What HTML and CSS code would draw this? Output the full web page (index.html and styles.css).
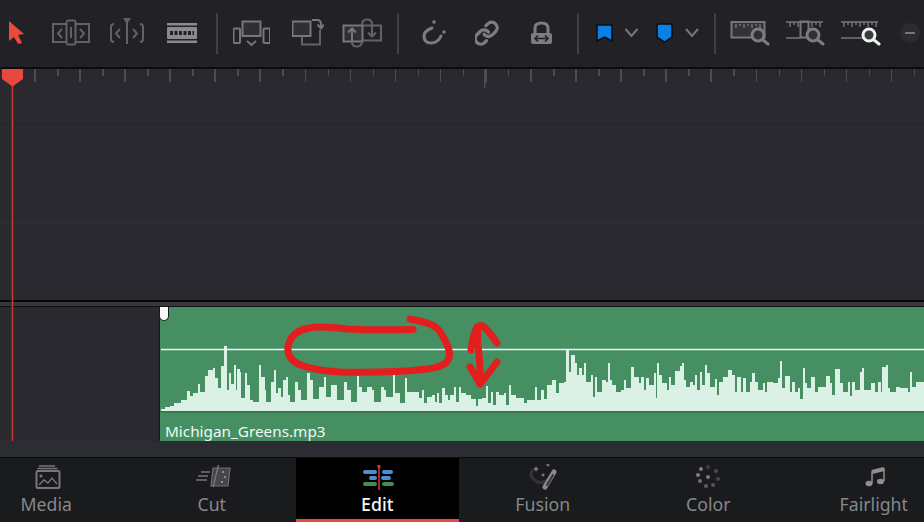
FILE: index.html
```html
<!DOCTYPE html>
<html lang="en">
<head>
    <meta charset="UTF-8">
    <meta name="viewport" content="width=device-width, initial-scale=1.0">
    <title>Edit page timeline</title>
    <link rel="stylesheet" href="styles.css">
</head>
<body>
    <div class="toolbar">
        <!-- every icon uses page coordinates in its viewBox -->
        <svg class="tool tool-arrow" viewBox="8 0 17 67"><path class="red" d="M9 21L24 34 18 35 22 43 18 44 14 37 9 41Z"/></svg>
        <svg class="tool tool-trim" viewBox="52 0 38 67"><g class="line dim"><path d="M66 24H53V42H66M76 24H89V42H76"/><rect x="66.5" y="20.5" width="9" height="24" rx="2"/><path d="M71 27V38M62 29L58 33.500 62 38M80 29L84 33.500 80 38"/></g></svg>
        <svg class="tool tool-dynamic" viewBox="110 0 34 67"><g class="line dim"><path d="M114 24Q111 24 111 27V39Q111 42 114 42M140 24Q143 24 143 27V39Q143 42 140 42M127 22V44M120 29L116 33.500 120 38M133 29L137 33.500 133 38"/></g><path class="dim-fill" d="M123 18H131L127 24Z"/></svg>
        <svg class="tool tool-blade" viewBox="167 0 30 67"><rect class="blade" x="167" y="23" width="30" height="2.500"/><rect class="blade" x="167" y="40.500" width="30" height="2.500"/><rect class="blade" x="167" y="27" width="30" height="12" rx="1"/><path class="blade-cut" d="M170 33H194"/></svg>
        <span class="sep sep-one"></span>
        <svg class="tool tool-insert" viewBox="233 0 37 67"><g class="line"><rect class="panel" x="242.500" y="21.500" width="18" height="14.500"/><rect x="233.500" y="28.500" width="6.500" height="14.500" rx="1"/><rect x="263.500" y="28.500" width="6.500" height="14.500" rx="1"/><path d="M247 41L251.500 45 256 41"/></g></svg>
        <svg class="tool tool-overwrite" viewBox="292 0 32 67"><g class="line"><path class="dim" d="M305 44.500H320V30"/><path class="dim" d="M302 37V44.500H306"/><rect class="panel" x="292.500" y="21.500" width="18" height="14.500"/><path d="M312 20H317Q321 20 321 24V28M317.500 24.500L321 28.500 324 24.500"/></g></svg>
        <svg class="tool tool-replace" viewBox="342 0 40 67"><g class="line"><rect class="dim" x="362" y="25.500" width="19" height="15"/><rect class="panel" x="343.500" y="25.500" width="19" height="16"/><path d="M352 44V29M348 32.500L352 28.500 356 32.500"/><path class="dim" d="M372 24V36M368 32.500L372 36.500 376 32.500M362 25Q362 19.500 367 19.500 372 19.500 372 24M352 42Q352 46.500 357 46.500 362 46.500 362 41"/></g></svg>
        <span class="sep sep-two"></span>
        <svg class="tool tool-snap" viewBox="422 0 24 67"><path class="line thick" d="M432 28Q424 31 424 36 424 43 431 43 438 43 441 36"/><circle class="gray-fill" cx="434" cy="22" r="1.800"/><circle class="gray-fill" cx="444" cy="32" r="1.800"/></svg>
        <svg class="tool tool-link" viewBox="475 0 24 67"><g class="line thick" transform="translate(473 20) scale(1.1)"><path d="M10 13a5 5 0 0 0 7.540.540l3-3a5 5 0 0 0-7.070-7.070l-1.720 1.710"/><path d="M14 11a5 5 0 0 0-7.540-.540l-3 3a5 5 0 0 0 7.070 7.070l1.710-1.710"/></g></svg>
        <svg class="tool tool-lock" viewBox="530 0 23 67"><path class="line thick" d="M535 33V28Q535 23 541.500 23 548 23 548 28V33"/><rect class="gray-fill" x="531" y="33" width="21" height="11" rx="2"/><path class="lock-arrow" d="M535 38.500H548M538 35.500L535 38.500 538 41.500M545 35.500L548 38.500 545 41.500"/></svg>
        <span class="sep sep-three"></span>
        <svg class="tool tool-flag" viewBox="595 0 18 67"><path class="blue-mark" d="M597 25H612V41L604.500 37 597 41Z"/></svg>
        <svg class="tool tool-chevron-a" viewBox="625 0 13 67"><path class="line" d="M625.500 29L631.500 36 637.500 29"/></svg>
        <svg class="tool tool-marker" viewBox="656 0 18 67"><path class="blue-mark" d="M659 24H670Q672 24 672 26V37L664.500 42 657 37V26Q657 24 659 24Z"/></svg>
        <svg class="tool tool-chevron-b" viewBox="685 0 14 67"><path class="line" d="M686 29L692 36 698 29"/></svg>
        <span class="sep sep-four"></span>
        <svg class="tool tool-zoom-a" viewBox="729 0 40 67"><rect class="ruler-fill" x="730.500" y="22" width="33" height="15.500"/><path class="line thin" d="M735 24V28M739 24V26M743 24V28M747 24V26M751 24V28M755 24V26M759 24V28"/><circle class="lens" cx="757" cy="35" r="6"/><path class="line thick" d="M762 40L767 44"/></svg>
        <svg class="tool tool-zoom-b" viewBox="784 0 40 67"><path class="line thin" d="M785 22H822M789 22V27M793 22V25M797 22V27M811 22V27M815 22V25M819 22V27M785 38H799"/><rect class="line" x="799.500" y="21.500" width="8" height="16"/><circle class="lens" cx="812" cy="35" r="6"/><path class="line thick" d="M817 40L822 44"/></svg>
        <svg class="tool tool-zoom-c" viewBox="840 0 40 67"><path class="line thin" d="M840 22H877M843 22V27M847 22V25M851 22V27M855 22V25M859 22V27M863 22V25M867 22V27M871 22V25M875 22V27M840 38H861"/><circle class="lens lens-on" cx="868" cy="35" r="6"/><path class="line thick line-on" d="M873 40L878 44"/></svg>
        <svg class="tool tool-minus" viewBox="899 0 20 67"><circle cx="909" cy="33" r="10" fill="#2c2c30"/><path class="line" d="M904 33H914"/></svg>
    </div>

    <div class="timeline">
        <div class="ruler"></div>
        <div class="track-row track-row-tall"></div>
        <div class="track-row track-row-short"></div>
        <div class="split"></div>
        <div class="audio-track">
            <div class="clip">
                <span class="clip-handle"></span>
                <svg class="waveform" viewBox="160 307 764 106">
                    <path class="wave" d="M161 412V409H165V407H170V406H174V403H181V400H187V391H190V396H193V393H198V384H200V392H205V376H208V370H213V368H215V378H218V388H221V366H224V346H227V390H229V373H231V384H234V365H236V390H237V369H240V372H241V398H245V373H247V385H250V400H253V402H259V365H261V377H265V390H266V402H271V382H274V370H276V393H278V388H281V397H283V380H286V377H288V395H290V402H295V382H298V390H301V400H307V373H310V380H313V399H319V387H324V377H326V397H331V385H337V400H344V382H347V390H351V402H357V376H359V387H362V392H367V387H372V390H374V402H381V387H384V390H386V397H393V375H395V393H400V403H405V378H407V392H415V392H419V398H422V390H424V403H427V397H432V395H435V402H437V393H439V403H442V388H445V395H448V400H450V395H454V387H456V402H459V387H461V393H466V395H471V399H476V406H478V399H482V398H486V386H488V403H491V392H493V405H496V392H499V395H504V393H506V405H509V385H511V395H516V398H524V403H527V400H532V400H535V387H537V400H541V390H544V399H547V385H552V380H556V393H559V383H564V382H566V350H569V372H571V355H575V363H577V375H579V368H582V375H584V363H586V382H591V375H593V397H595V377H597V392H602V380H606V382H608V363H610V380H612V385H616V392H621V390H624V380H626V388H631V367H634V377H639V383H641V377H644V390H646V378H649V385H654V373H656V398H657V363H659V375H662V383H667V390H669V377H671V385H675V371H680V366H682V363H684V380H686V387H690V382H693V385H695V375H697V390H700V372H702V385H705V365H707V373H710V387H715V379H717V395H719V382H723V377H728V370H732V375H735V392H737V377H741V392H743V378H746V392H750V382H752V373H755V382H758V390H763V383H765V392H767V382H773V383H778V378H780V361H782V388H785V376H790V392H792V382H795V392H798V388H800V399H803V368H805V383H807V388H811V377H815V392H818V387H826V376H830V383H832V395H835V369H840V383H843V392H848V382H850V396H852V382H855V390H860V372H862V368H864V390H871V383H875V392H878V382H881V392H882V367H886V365H888V388H890V392H896V387H900V388H905V388H908V392H910V372H912V387H916V382H924V412Z"/>
                    <path class="wave-line" d="M161 349.500H924"/>
                    <path class="wave-base" d="M160 412H924"/>
                </svg>
                <div class="clip-name">Michigan_Greens.mp3</div>
            </div>
        </div>
        <svg class="playhead" viewBox="0 0 26 372"><path class="playhead-line" d="M12.500 10V372"/><path class="playhead-head" d="M2 0H23V10L12.500 17.500 2 10Z"/></svg>
    </div>

    <div class="gutter"></div>

    <div class="tabs">
        <div class="tab">
            <svg viewBox="26 465 40 30"><path class="line thin" d="M39 467H55M37.500 469.500H57.500"/><rect class="line" x="36.500" y="472" width="23" height="17" rx="1"/><circle class="gray-fill" cx="41" cy="477" r="1.500"/><path class="line thin" d="M39 486L44 481 48 484 52 479 57 485"/></svg>
            <span class="tab-label">Media</span>
        </div>
        <div class="tab">
            <svg viewBox="191 465 40 30"><path class="film" d="M212 469H229L227 487H210Z"/><path class="line thin" d="M217.500 466L212 488M200 473H209M197 477H207M195 481H206"/><circle class="tab-dot" cx="222" cy="473" r="1"/><circle class="tab-dot" cx="224" cy="478" r="1"/><circle class="tab-dot" cx="221" cy="483" r="1"/></svg>
            <span class="tab-label">Cut</span>
        </div>
        <div class="tab tab-active">
            <svg viewBox="357 465 40 30"><g class="pill-blue"><rect x="363" y="471" width="14" height="4" rx="2"/><rect x="382" y="471" width="11" height="4" rx="2"/><rect x="369" y="477" width="8" height="4" rx="2"/><rect x="381" y="477" width="10" height="4" rx="2"/></g><g class="pill-green"><rect x="363" y="483" width="14" height="4" rx="2"/><rect x="382" y="483" width="12" height="4" rx="2"/></g><path class="edit-head" d="M379 468V491"/><rect class="edit-cap" x="377.500" y="466" width="3" height="3"/></svg>
            <span class="tab-label">Edit</span>
        </div>
        <div class="tab">
            <svg viewBox="522 465 40 30"><path class="swirl" d="M548 480Q540 487 532 480 528 475 532 471"/><path class="wand" d="M553 473L544 488"/><path class="wand-core" d="M552 476L546 486"/><path class="gray-fill" d="M535 467L536 469 538 470 536 471 535 473 534 471 532 470 534 469ZM547 464L548 465.500 549.500 466 548 466.500 547 468 546 466.500 544.500 466 546 465.500ZM542 474L543 475.500 544.500 476 543 476.500 542 478 541 476.500 539.500 476 541 475.500Z"/></svg>
            <span class="tab-label">Fusion</span>
        </div>
        <div class="tab">
            <svg viewBox="688 465 40 30"><g class="color-dots"><circle cx="708" cy="468" r="2" opacity=".35"/><circle cx="716" cy="472" r="2" opacity=".5"/><circle cx="718" cy="480" r="2" opacity=".45"/><circle cx="713" cy="486" r="2" opacity=".6"/><circle cx="706" cy="487" r="2" opacity=".7"/><circle cx="700" cy="482" r="2" opacity=".85"/><circle cx="698" cy="476" r="2"/><circle cx="701" cy="470" r="2"/><circle cx="708" cy="478" r="2"/></g></svg>
            <span class="tab-label">Color</span>
        </div>
        <div class="tab">
            <svg viewBox="853 465 40 30"><path class="note" d="M871 484V473L883 470V482"/><ellipse class="note-head" cx="868" cy="484.500" rx="3.500" ry="2.800"/><ellipse class="note-head" cx="879.500" cy="482.500" rx="3.500" ry="2.800"/><path class="note-beam" d="M871 473L883 470"/></svg>
            <span class="tab-label">Fairlight</span>
        </div>
        <span class="tab-marker"></span>
    </div>

    <!-- hand drawn annotation on top of the screenshot -->
    <svg class="scribble" viewBox="0 0 924 522">
        <path d="M413 329.500C390 330 365 330 347 329 330 327 318 326 309 328 297 330 291 336 288.500 344 286 354 291 360 298 364 310 369 322 371 340 372 370 372.500 400 372 423 369.500 438 368 447 365 449 358 451 350 446 342 441 333 436 324 425 322 410 319 395 318 383 321.500"/>
        <path d="M480 384C481 370 479 355 478 345 477 338 478 332 478 327M471 350C472 342 474 333 477 327 480 324 484 326 487 330 491 334 494 339 497 343M470 367C473 372 477 378 480 384 485 378 491 370 497 362"/>
    </svg>
</body>
</html>
```

FILE: styles.css
```css
/* Basic reset */
* {
    margin: 0;
    padding: 0;
    box-sizing: border-box;
}

html, body {
    width: 924px;
    height: 522px;
    overflow: hidden;
}

body {
    position: relative;
    display: flex;
    flex-direction: column;
    background: #2c2d32;
    font-family: "Noto Sans", "Open Sans", sans-serif;
}

/* Toolbar */
.toolbar {
    display: flex;
    flex: none;
    height: 69px;
    background: #222226;
    border-bottom: 2px solid #0c0c0e;
}

.tool {
    flex: none;
    height: 67px;
}

.tool-arrow { width: 17px; margin-left: 8px; }
.tool-trim { width: 38px; margin-left: 27px; }
.tool-dynamic { width: 34px; margin-left: 20px; }
.tool-blade { width: 30px; margin-left: 23px; }
.tool-insert { width: 37px; margin-left: 16px; }
.tool-overwrite { width: 32px; margin-left: 22px; }
.tool-replace { width: 40px; margin-left: 18px; }
.tool-snap { width: 24px; margin-left: 24px; }
.tool-link { width: 24px; margin-left: 29px; }
.tool-lock { width: 23px; margin-left: 31px; }
.tool-flag { width: 18px; margin-left: 17px; }
.tool-chevron-a { width: 13px; margin-left: 12px; }
.tool-marker { width: 18px; margin-left: 18px; }
.tool-chevron-b { width: 14px; margin-left: 11px; }
.tool-zoom-a { width: 40px; margin-left: 15px; }
.tool-zoom-b { width: 40px; margin-left: 15px; }
.tool-zoom-c { width: 40px; margin-left: 16px; }
.tool-minus { width: 20px; margin-left: 19px; }

.sep {
    flex: none;
    width: 1.500px;
    height: 41px;
    margin-top: 13px;
    margin-right: -0.500px;
    background: #414145;
}

.sep-one { margin-left: 19px; }
.sep-two { margin-left: 15px; }
.sep-three { margin-left: 24px; }
.sep-four { margin-left: 15px; }

.line {
    fill: none;
    stroke: #77777b;
    stroke-width: 2;
}

.line rect { fill: none; }
.line .panel { fill: #303034; }
.line.dim, .line .dim { stroke: #626266; }
.line.thin { stroke-width: 1.400; }
.line.thick { stroke-width: 3; stroke: #7d7d81; stroke-linecap: round; }
.line.line-on { stroke: #e8f5ec; }

.dim-fill { fill: #626266; }
.gray-fill { fill: #7d7d81; }
.red { fill: #e8483e; }
.blade { fill: #8b8b8d; }

.blade-cut {
    fill: none;
    stroke: #222226;
    stroke-width: 4;
    stroke-dasharray: 3 1.500;
}

.lock-arrow {
    fill: none;
    stroke: #222226;
    stroke-width: 1.600;
}

.blue-mark {
    fill: #0a80e6;
    stroke: #0b0b10;
    stroke-width: 1.500;
}

.ruler-fill {
    fill: #333336;
    stroke: #77777b;
    stroke-width: 2;
}

.lens {
    fill: #303034;
    stroke: #7d7d81;
    stroke-width: 3;
}

.lens-on { stroke: #e8f5ec; fill: #3a3a3e; }

/* Timeline */
.timeline {
    position: relative;
    flex: none;
    height: 372px;
    background: #29292f;
}

.ruler {
    height: 55px;
    border-bottom: 1px solid #232328;
    background-image:
        linear-gradient(#4c4c52, #4c4c52),
        repeating-linear-gradient(90deg, #4c4c52 0 1.500px, transparent 1.500px 45.100px),
        repeating-linear-gradient(90deg, #4c4c52 0 1.500px, transparent 1.500px 45.100px);
    background-repeat: no-repeat;
    background-size: 1.500px 19px, 100% 13px, 100% 7px;
    background-position: 484px 0, 34px 0, 57px 0;
}

.track-row {
    border-bottom: 1px solid #2f2f35;
}

.track-row-tall { height: 99px; }
.track-row-short { height: 77px; border-bottom: none; }

.split {
    height: 7px;
    background: #38383b;
    border-top: 2px solid #08080a;
    border-bottom: 1px solid #111114;
}

.audio-track {
    display: flex;
    justify-content: flex-end;
    height: 134px;
}

.clip {
    position: relative;
    width: 765px;
    background: #468f63;
    border-left: 1px solid #18181b;
}

.clip-handle {
    position: absolute;
    top: 0;
    left: -1px;
    width: 10px;
    height: 14px;
    background: #f6f7f6;
    border: 1px solid #18181b;
    border-top: none;
    border-radius: 0 0 5px 5px;
}

.waveform {
    display: block;
    width: 764px;
    height: 106px;
}

.wave { fill: #dcf1e6; }

.wave-line {
    stroke: #eef8f2;
    stroke-width: 1.500;
}

.wave-base {
    stroke: #3a7652;
    stroke-width: 2;
}

.clip-name {
    padding-left: 5px;
    color: #f3f6f4;
    font-size: 15.300px;
    line-height: 36px;
    height: 28px;
}

.playhead {
    position: absolute;
    top: 0;
    left: 0;
    width: 26px;
    height: 372px;
}

.playhead-line {
    stroke: #c33a2e;
    stroke-width: 1.600;
}

.playhead-head { fill: #e8483e; }

.gutter {
    flex: none;
    height: 17px;
    border-bottom: 1px solid #0c0c0e;
}

/* Page tabs */
.tabs {
    position: relative;
    display: flex;
    flex: none;
    gap: 3px;
    height: 64px;
    margin-left: -35px;
    width: 1000px;
    background: #1a1b1d;
}

.tab {
    display: flex;
    flex-direction: column;
    align-items: center;
    flex: none;
    width: 162.500px;
    padding-top: 6px;
}

.tab svg {
    flex: none;
    width: 40px;
    height: 30px;
}

.tab-label {
    margin-top: -2px;
    color: #85888c;
    font-size: 17.700px;
    line-height: 24px;
}

.tab-active { background: #000; }

.tab-active .tab-label {
    color: #f4f7f8;
    font-weight: 500;
}

.tab-marker {
    position: absolute;
    bottom: 0;
    left: 331px;
    width: 162.500px;
    height: 3px;
    background: #e8483e;
}

.film { fill: #47474a; stroke: #6f6f73; stroke-width: 1.200; }
.tab-dot { fill: #a0a0a2; }
.pill-blue { fill: #4a90d0; }
.pill-green { fill: #3f8f4f; }
.edit-head { stroke: #d8382e; stroke-width: 1.500; }
.edit-cap { fill: #d8382e; }
.swirl { fill: none; stroke: #333336; stroke-width: 3; }
.wand { stroke: #8a8a8c; stroke-width: 5; stroke-linecap: round; }
.wand-core { stroke: #333336; stroke-width: 2; stroke-linecap: round; }
.color-dots { fill: #7d7d80; }
.note { fill: none; stroke: #8f8f91; stroke-width: 1.500; }
.note-head { fill: #8f8f91; }
.note-beam { stroke: #8f8f91; stroke-width: 4; }

/* Red annotation */
.scribble {
    position: absolute;
    top: 0;
    left: 0;
    width: 924px;
    height: 522px;
    pointer-events: none;
}

.scribble path {
    fill: none;
    stroke: #e31e1e;
    stroke-width: 7;
    stroke-linecap: round;
    stroke-linejoin: round;
}
```
